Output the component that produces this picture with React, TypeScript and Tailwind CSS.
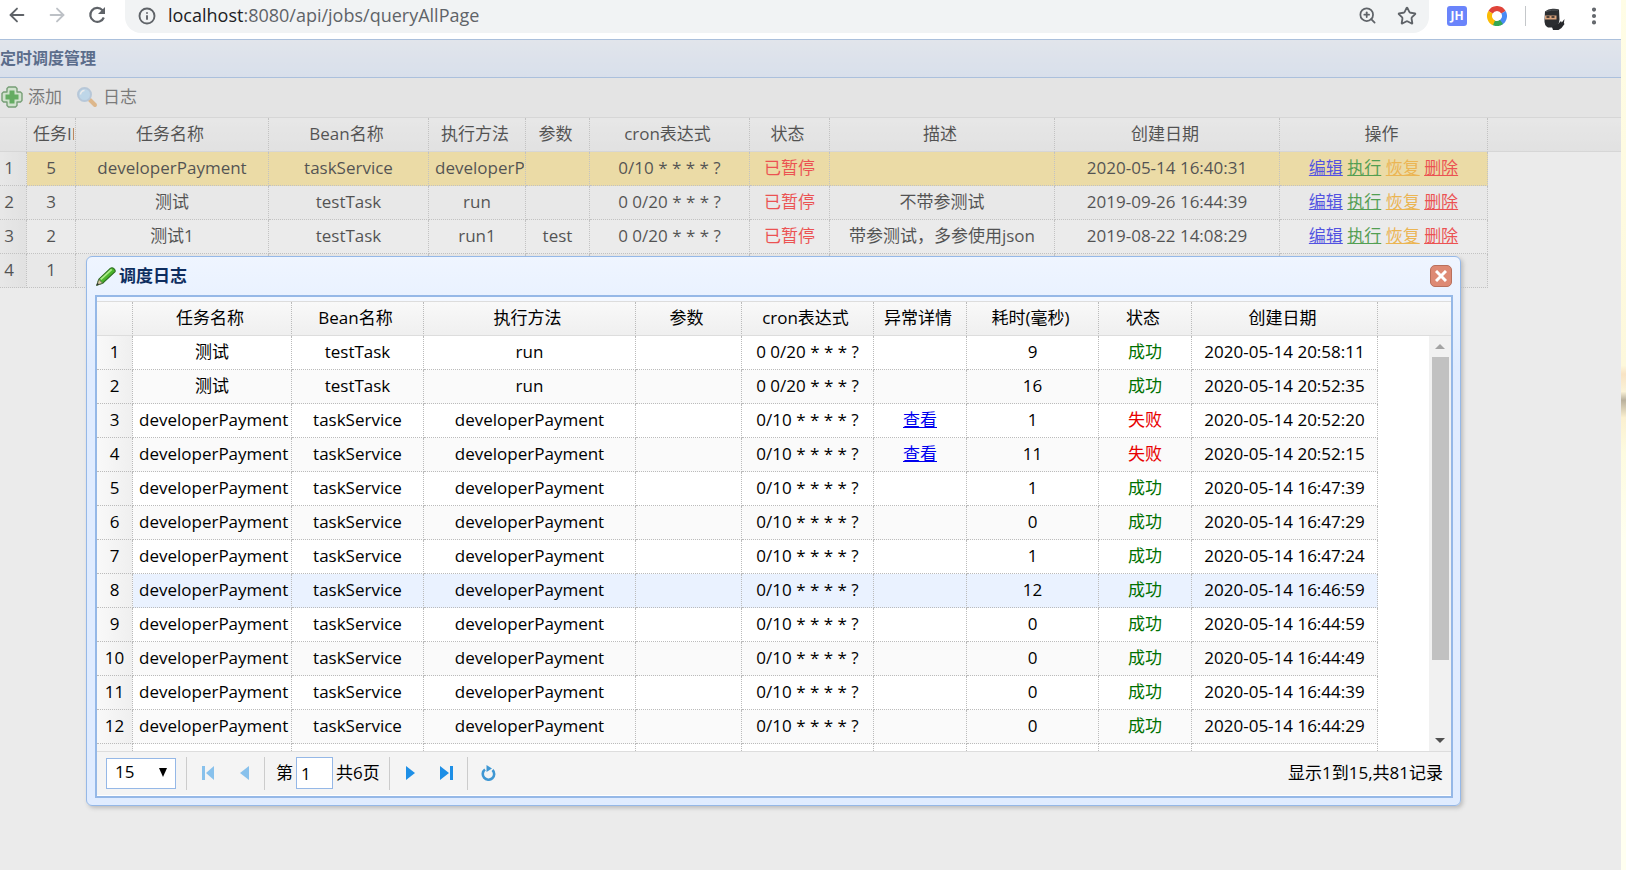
import type { ReactNode } from "react";
import { ArrowLeft, ArrowRight, EllipsisVertical, Info, Star, ZoomIn } from "lucide-react";
import clsx from "clsx";

type Task = {
  id: number;
  name?: string;
  bean?: string;
  method?: string;
  params?: string;
  cron?: string;
  desc?: string;
  created?: string;
};

type Log = {
  name: string;
  bean: string;
  method: string;
  cron: string;
  ms: number;
  ok: boolean;
  created: string;
};

const TASKS: Task[] = [
  { id: 5, name: "developerPayment", bean: "taskService", method: "developerPayment", cron: "0/10 * * * * ?", created: "2020-05-14 16:40:31" },
  { id: 3, name: "测试", bean: "testTask", method: "run", cron: "0 0/20 * * * ?", desc: "不带参测试", created: "2019-09-26 16:44:39" },
  { id: 2, name: "测试1", bean: "testTask", method: "run1", params: "test", cron: "0 0/20 * * * ?", desc: "带参测试，多参使用json", created: "2019-08-22 14:08:29" },
  { id: 1 },
];

const test = { name: "测试", bean: "testTask", method: "run", cron: "0 0/20 * * * ?" };
const pay = { name: "developerPayment", bean: "taskService", method: "developerPayment", cron: "0/10 * * * * ?" };

const LOGS: Log[] = [
  { ...test, ms: 9, ok: true, created: "2020-05-14 20:58:11" },
  { ...test, ms: 16, ok: true, created: "2020-05-14 20:52:35" },
  { ...pay, ms: 1, ok: false, created: "2020-05-14 20:52:20" },
  { ...pay, ms: 11, ok: false, created: "2020-05-14 20:52:15" },
  { ...pay, ms: 1, ok: true, created: "2020-05-14 16:47:39" },
  { ...pay, ms: 0, ok: true, created: "2020-05-14 16:47:29" },
  { ...pay, ms: 1, ok: true, created: "2020-05-14 16:47:24" },
  { ...pay, ms: 12, ok: true, created: "2020-05-14 16:46:59" },
  { ...pay, ms: 0, ok: true, created: "2020-05-14 16:44:59" },
  { ...pay, ms: 0, ok: true, created: "2020-05-14 16:44:49" },
  { ...pay, ms: 0, ok: true, created: "2020-05-14 16:44:39" },
  { ...pay, ms: 0, ok: true, created: "2020-05-14 16:44:29" },
];

const TASK_COLS: [string, string][] = [
  ["", "w-[27px]"],
  ["任务ID", "w-[49px]"],
  ["任务名称", "w-[193px]"],
  ["Bean名称", "w-[160px]"],
  ["执行方法", "w-[97px]"],
  ["参数", "w-[64px]"],
  ["cron表达式", "w-[160px]"],
  ["状态", "w-[80px]"],
  ["描述", "w-[225px]"],
  ["创建日期", "w-[225px]"],
  ["操作", "w-[208px]"],
];

const LOG_COLS: [string, string][] = [
  ["", "w-[36px]"],
  ["任务名称", "w-[159px]"],
  ["Bean名称", "w-[132px]"],
  ["执行方法", "w-[212px]"],
  ["参数", "w-[106px]"],
  ["cron表达式", "w-[132px]"],
  ["异常详情", "w-[93px]"],
  ["耗时(毫秒)", "w-[132px]"],
  ["状态", "w-[93px]"],
  ["创建日期", "w-[186px]"],
];

const numCls = "h-[34px] border-r border-b border-dotted border-[#bbb] p-0 pb-[2px] text-center bg-linear-to-r from-[#f9f9f9] to-[#efefef]";

function Cell({ children, className }: { children?: ReactNode; className?: string }) {
  return (
    <td className={clsx("h-[34px] border-r border-b border-dotted border-[#bbb] p-0 pb-[2px]", className)}>
      <div className="mr-px ml-[6px] overflow-hidden pr-[5px] text-center whitespace-nowrap">{children}</div>
    </td>
  );
}

function Head({ cols }: { cols: [string, string][] }) {
  return (
    <>
      <colgroup>
        {cols.map(([, w], i) => (
          <col key={i} className={w} />
        ))}
        <col />
      </colgroup>
      <thead>
        <tr className="bg-linear-to-b from-[#f9f9f9] to-[#efefef]">
          {cols.map(([label], i) => (
            <th key={i} className="h-[34px] border-r border-b border-dotted border-[#bbb] border-b-[#ddd] [border-bottom-style:solid] p-0 pb-[2px] font-[370]">
              <div className="mr-px ml-[6px] overflow-hidden pr-[9px] text-center whitespace-nowrap">{label}</div>
            </th>
          ))}
          <th className="border-b border-[#ddd] p-0" />
        </tr>
      </thead>
    </>
  );
}

function AddIcon() {
  return (
    <svg viewBox="0 0 22 22" className="h-[22px] w-[22px]">
      <path d="M7.500 1h7l1.500 1.500V6h3.500L21 7.500v7L19.500 16H16v3.500L14.500 21h-7L6 19.500V16H2.500L1 14.500v-7L2.500 6H6V2.500z" fill="#d4f0cf" stroke="#3c7f3c" strokeWidth="1.400" strokeLinejoin="round" />
      <path d="M8.500 4.500h5v4h4v5h-4v4h-5v-4h-4v-5h4z" fill="#1f961c" />
    </svg>
  );
}

function SearchIcon() {
  return (
    <svg viewBox="0 0 22 22" className="h-[22px] w-[22px]">
      <path d="M14 14l5 5" stroke="#e8a860" strokeWidth="4" strokeLinecap="round" />
      <circle cx="8.500" cy="8.500" r="6.500" fill="#b4dcfb" stroke="#a9c4e0" strokeWidth="2" />
      <path d="M4.500 8.500a4 4 0 0 1 4-4" stroke="#fff" strokeWidth="1.500" fill="none" />
    </svg>
  );
}

function PencilIcon() {
  return (
    <svg viewBox="0 0 22 22" className="h-[21px] w-[21px]">
      <path d="M2 20l2-6L16 2.500q2-1.500 4 .5t.5 3.500L8 18z" fill="#4bb52b" stroke="#2d6e22" strokeWidth="1.200" />
      <path d="M6 14L17.500 3.500" stroke="#a8ec84" strokeWidth="2" />
      <path d="M2 20l2-6 4 4z" fill="#d9c7a0" stroke="#5b7050" strokeWidth="1" />
      <path d="M1.500 20.500l1-3 2 2z" fill="#333" />
    </svg>
  );
}

function ReloadIcon() {
  return (
    <svg viewBox="0 0 20 20" className="h-5 w-5">
      <path d="M15.500 5.200A7 7 0 1 0 16.800 12.500" fill="none" stroke="currentColor" strokeWidth="2.200" />
      <path d="M18 2v7h-7z" fill="currentColor" />
    </svg>
  );
}

function Ninja() {
  return (
    <svg viewBox="0 0 22 22" className="h-[22px] w-[22px]">
      <path d="M2 3.500Q5 1 9.500.8T16 1.500l.5 10q-.5 6-4 8H5q-4-2-3.500-8z" fill="#2b2d30" />
      <path d="M3 3.500q5-2 12-1.500" stroke="#55585c" strokeWidth="1" fill="none" />
      <path d="M2 7.500h11.500v4H2z" fill="#d9a27c" />
      <path d="M3.500 9h3M8.500 9h3" stroke="#222" strokeWidth="1.500" />
      <path d="M9 19l6-3 3-3 .8 1.500 2.700-3.500-.6 4 .6 1-3 4-3 2H10z" fill="#26282b" />
    </svg>
  );
}

function BrowserBar() {
  return (
    <header className="flex h-[39px] items-start bg-white pl-[6px] font-['Open_Sans'] font-normal text-[#5f6368]">
      <nav className="flex gap-[18px] pt-1">
        <button aria-label="Back"><ArrowLeft size={22} strokeWidth={2} /></button>
        <button aria-label="Forward" className="text-[#bdc1c6]"><ArrowRight size={22} strokeWidth={2} /></button>
        <button aria-label="Reload" className="ml-px"><ReloadIcon /></button>
      </nav>
      <div className="ml-[18px] flex h-[33px] flex-1 items-center rounded-b-[16px] bg-[#f1f3f4] pr-3 pb-[2px] pl-[13px]">
        <Info size={18} strokeWidth={2.5} />
        <span className="ml-3 flex-1 pb-[2px] text-[18px] leading-[28px]">
          <span className="text-[#202124]">localhost</span>:8080/api/jobs/queryAllPage
        </span>
        <button aria-label="Zoom" className="mr-[20px]"><ZoomIn size={19} strokeWidth={2.2} /></button>
        <button aria-label="Bookmark"><Star size={20} strokeWidth={2.2} /></button>
      </div>
      <div className="flex h-[31px] items-center pr-4 pl-[18px]">
        <span className="flex h-5 w-5 items-center justify-center rounded-[3px] bg-[#6a84fb] text-[12px] font-bold text-white">JH</span>
        <svg viewBox="0 0 20 20" className="ml-5 h-5 w-5" fill="none" strokeWidth="5">
          <path d="M3.500 6.250a7.500 7.500 0 0 1 13 0" stroke="#e0443a" />
          <path d="M16.500 6.250a7.500 7.500 0 0 1-4 10.800" stroke="#4a8af4" />
          <path d="M14.500 16a7.500 7.500 0 0 1-8.500.3" stroke="#34a853" />
          <path d="M7 16.900a7.500 7.500 0 0 1-3.500-10.650" stroke="#fbbc05" />
        </svg>
        <span className="ml-[18px] h-[20px] w-px bg-[#c4c7ca]" />
        <span className="mt-[6px] ml-[17px]"><Ninja /></span>
        <button aria-label="Menu" className="ml-[18px]"><EllipsisVertical size={22} strokeWidth={2.5} /></button>
      </div>
    </header>
  );
}

function TaskGrid() {
  return (
    <table className="w-full table-fixed border-separate border-spacing-0">
      <Head cols={TASK_COLS} />
      <tbody>
        {TASKS.map((t, i) => (
          <tr key={t.id} className={i === 0 ? "bg-[#ffe48d]" : i % 2 ? "bg-[#fafafa]" : "bg-white"}>
            <td className={clsx(numCls, "pr-2")}>{i + 1}</td>
            <Cell>{t.id}</Cell>
            <Cell>{t.name}</Cell>
            <Cell>{t.bean}</Cell>
            <Cell>{t.method}</Cell>
            <Cell>{t.params}</Cell>
            <Cell>{t.cron}</Cell>
            <Cell className="text-[#f00]">{t.name && "已暂停"}</Cell>
            <Cell>{t.desc}</Cell>
            <Cell>{t.created}</Cell>
            <Cell>
              {t.name && (
                <>
                  <a href="#edit" className="text-[#00e] underline">编辑</a>{" "}
                  <a href="#run" className="text-[#008000] underline">执行</a>{" "}
                  <a href="#resume" className="text-[#ffa500] underline">恢复</a>{" "}
                  <a href="#delete" className="text-[#f00] underline">删除</a>
                </>
              )}
            </Cell>
            <td className="bg-white" />
          </tr>
        ))}
      </tbody>
    </table>
  );
}

function LogGrid() {
  return (
    <table className="w-full table-fixed border-separate border-spacing-0">
      <Head cols={LOG_COLS} />
      <tbody>
        {LOGS.map((l, i) => (
          <tr key={i} className={i === 7 ? "bg-[#eaf2ff]" : i % 2 ? "bg-[#fafafa]" : "bg-white"}>
            <td className={numCls}>{i + 1}</td>
            <Cell>{l.name}</Cell>
            <Cell>{l.bean}</Cell>
            <Cell>{l.method}</Cell>
            <Cell />
            <Cell>{l.cron}</Cell>
            <Cell>{!l.ok && <a href="#detail" className="text-[#00e] underline">查看</a>}</Cell>
            <Cell>{l.ms}</Cell>
            <Cell className={l.ok ? "text-[#007000]" : "text-[#e80000]"}>{l.ok ? "成功" : "失败"}</Cell>
            <Cell>{l.created}</Cell>
            <td className="bg-white" />
          </tr>
        ))}
        <tr>
          {LOG_COLS.map((c, i) => (
            <td key={i} className={clsx("h-[7px] border-r border-dotted border-[#bbb] p-0", i === 0 && "bg-[#f6f6f6]")} />
          ))}
          <td />
        </tr>
      </tbody>
    </table>
  );
}

function Divider() {
  return <span className="h-[33px] w-px bg-[#ccc]" />;
}

function Pager() {
  return (
    <div className="flex h-[44px] items-center border-t border-[#ddd] bg-[#f4f4f4] pr-2 pb-px pl-[9px]">
      <div className="relative">
        <select aria-label="每页条数" className="block h-[31px] w-[70px] appearance-none border border-[#95b8e7] bg-white pb-[2px] pl-2" defaultValue="15">
          <option>15</option>
        </select>
        <svg viewBox="0 0 8 9" className="pointer-events-none absolute top-[10px] right-[9px] h-[9px] w-2"><path d="M0 0h8L4 9z" /></svg>
      </div>
      <div className="flex flex-1 items-center pl-[10px]">
        <Divider />
        <button aria-label="首页" className="ml-[15px] opacity-50">
          <svg viewBox="0 0 13 14" className="h-[14px] w-[13px]" fill="#1e8fe6"><path d="M0 0h3v14H0zM12 0v14L4 7z" /></svg>
        </button>
        <button aria-label="上一页" className="ml-[25px] opacity-50">
          <svg viewBox="0 0 9 14" className="h-[14px] w-[9px]" fill="#1e8fe6"><path d="M9 0v14L0 7z" /></svg>
        </button>
        <span className="w-[15px]" />
        <Divider />
        <label className="ml-[11px] flex items-center">
          第
          <input className="ml-[3px] h-8 w-[37px] border border-[#95b8e7] bg-white pl-1" defaultValue="1" />
        </label>
        <span className="mr-[9px] ml-[3px]">共6页</span>
        <Divider />
        <button aria-label="下一页" className="ml-4">
          <svg viewBox="0 0 9 14" className="h-[14px] w-[9px]" fill="#1e8fe6"><path d="M0 0v14l9-7z" /></svg>
        </button>
        <button aria-label="末页" className="mr-[14px] ml-[25px]">
          <svg viewBox="0 0 13 14" className="h-[14px] w-[13px]" fill="#1e8fe6"><path d="M10 0h3v14h-3zM0 0v14l9-7z" /></svg>
        </button>
        <Divider />
        <button aria-label="刷新" className="ml-[13px]">
          <svg viewBox="0 0 15 16" className="h-4 w-[15px]" fill="none">
            <path d="M4 4.500a5.700 5.700 0 1 0 7.500.5" stroke="#3f97d3" strokeWidth="2.600" />
            <path d="M5.500 0v7l5.500-3.500z" fill="#3f97d3" />
          </svg>
        </button>
      </div>
      <span>显示1到15,共81记录</span>
    </div>
  );
}

function LogDialog() {
  return (
    <section
      role="dialog"
      aria-label="调度日志"
      className="absolute top-[217px] right-[160px] left-[86px] rounded-[6px] border border-[#95b8e7] bg-linear-to-b from-[#eff5ff] to-[#e0ecff] to-20% pr-[7px] pb-[7px] pl-2 shadow-[2px_2px_4px_#bbb]"
    >
      <div className="flex h-[38px] items-center pr-px">
        <PencilIcon />
        <h2 className="ml-[3px] flex-1 text-[17px] font-bold text-[#0e2d5f]">调度日志</h2>
        <button aria-label="关闭" className="flex h-[22px] w-[22px] items-center justify-center rounded-[5px] border border-[#b9705c] bg-[#de8a74]">
          <svg viewBox="0 0 12 12" className="h-3 w-3" stroke="#fff" strokeWidth="3"><path d="M1 1l10 10M11 1L1 11" /></svg>
        </button>
      </div>
      <div className="border-2 border-[#95b8e7] bg-white pb-px">
        <div className="h-[5px] border-b border-[#ddd] bg-[#f4f8ff]" />
        <div className="relative">
          <LogGrid />
          <div className="absolute top-[34px] right-0 bottom-0 flex w-[22px] flex-col items-center bg-[#f1f1f1]">
            <svg viewBox="0 0 10 5" className="my-2 h-[5px] w-[10px] shrink-0" fill="#a3a3a3"><path d="M0 5h10L5 0z" /></svg>
            <div className="w-[17px] flex-[304] bg-[#c1c1c1]" />
            <div className="flex-[70]" />
            <svg viewBox="0 0 10 5" className="my-2 h-[5px] w-[10px] shrink-0" fill="#505050"><path d="M0 0h10L5 5z" /></svg>
          </div>
        </div>
        <Pager />
      </div>
    </section>
  );
}

export default function App() {
  return (
    <div className="flex min-h-screen bg-[#fffde6]">
      <div className="flex flex-1 flex-col font-['Open_Sans','Noto_Sans_CJK_SC',sans-serif] text-[17px] leading-[24px] font-[370] text-black">
        <BrowserBar />
        <main className="relative flex-1 bg-white">
          <h1 className="flex h-[39px] items-center border-y border-[#95b8e7] bg-linear-to-b from-[#eff5ff] to-[#e0ecff] pb-[2px] text-base font-bold text-[#0e2d5f]">定时调度管理</h1>
          <div className="flex h-[40px] items-center border-b border-[#ddd] bg-[#f4f4f4] pb-[2px] text-[#444]">
            <button className="flex items-center gap-[5px] pl-px"><AddIcon />添加</button>
            <button className="ml-[14px] flex items-center gap-[5px]"><SearchIcon />日志</button>
          </div>
          <TaskGrid />
          <div className="absolute inset-0 bg-[#ccc]/40" />
          <LogDialog />
        </main>
      </div>
      <aside className="w-[5px] bg-[linear-gradient(#fffde6_0%,#fdf8dc_42%,#f8e3c4_43%,#fbf3d8_45%,#b9b09c_46%,#fbf0d0_48%,#fdfbe0_52%,#fffff0_62%)]" />
    </div>
  );
}
